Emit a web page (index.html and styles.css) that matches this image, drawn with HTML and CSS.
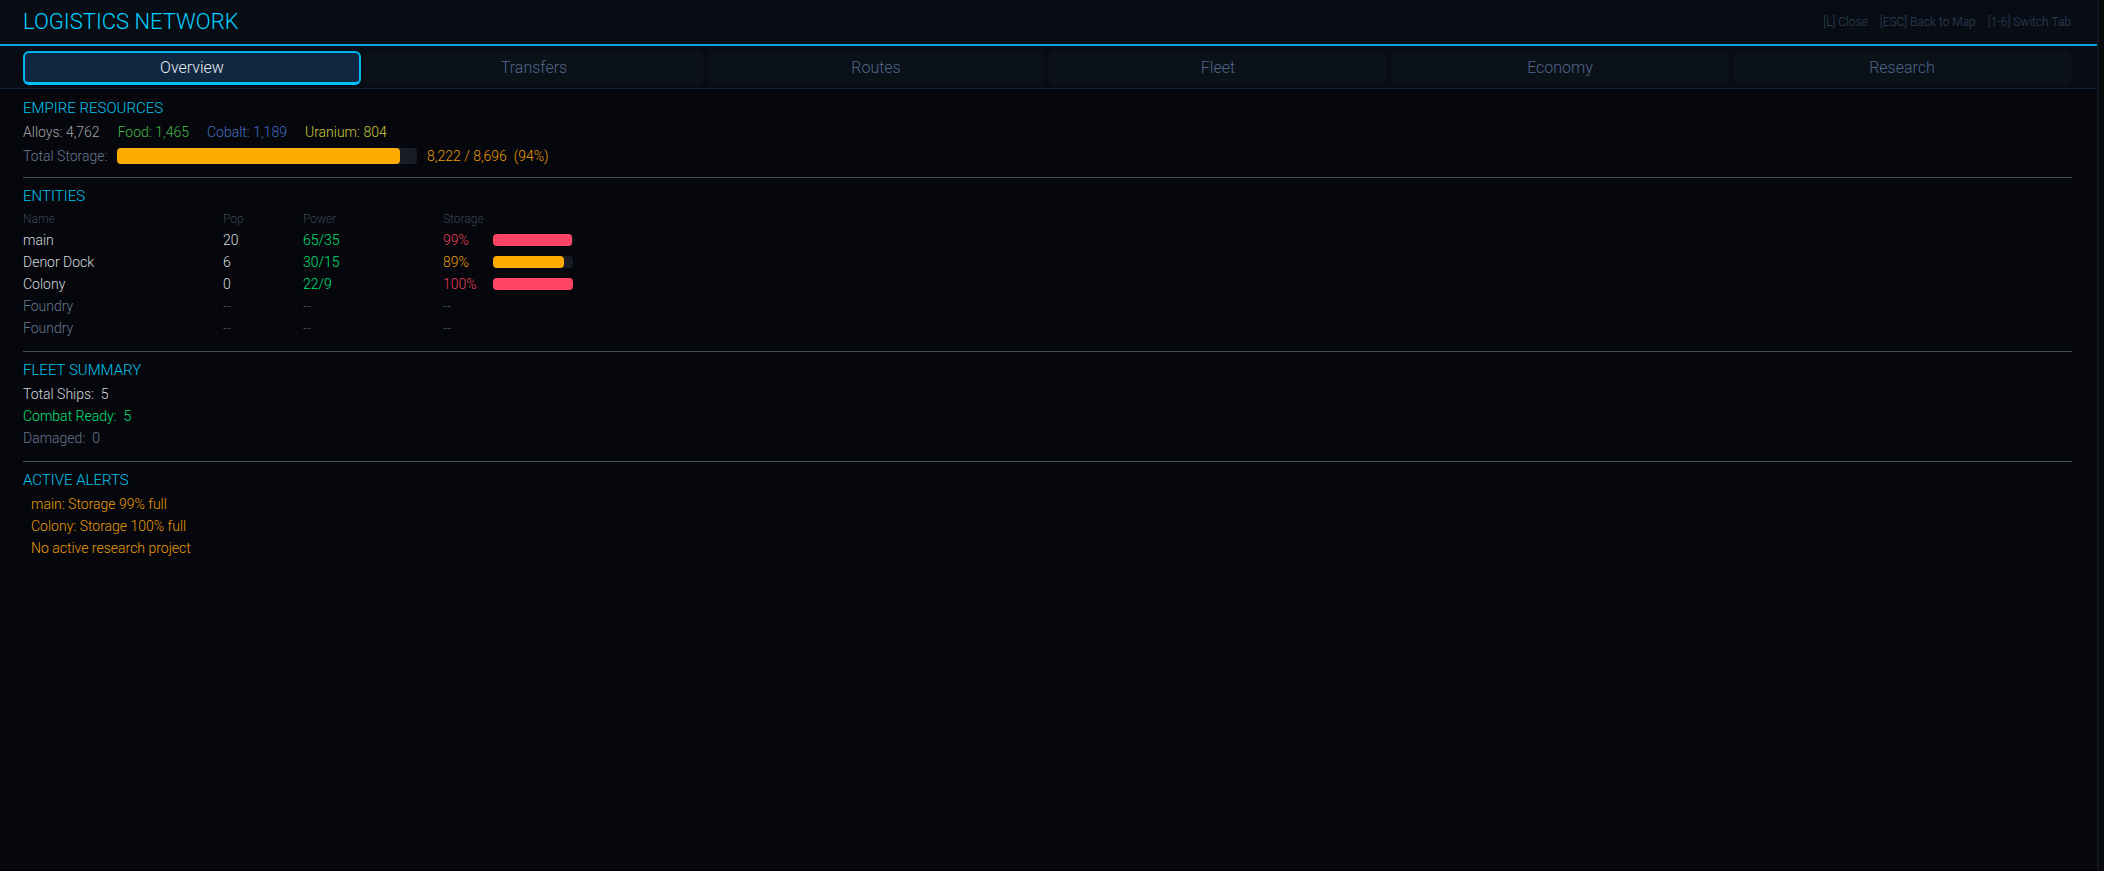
FILE: index.html
```
<!DOCTYPE html>
<html lang="en">
<head>
<meta charset="utf-8">
<title>Logistics Network</title>
<link rel="stylesheet" href="styles.css">
</head>
<body>
<div class="panel">
  <header class="header">
    <h1 class="title">LOGISTICS NETWORK</h1>
    <div class="hints"><span>[L] Close</span><span>[ESC] Back to Map</span><span>[1-6] Switch Tab</span></div>
  </header>
  <nav class="tabs">
    <button class="tab tab-active" type="button">Overview</button>
    <button class="tab" type="button">Transfers</button>
    <button class="tab" type="button">Routes</button>
    <button class="tab" type="button">Fleet</button>
    <button class="tab" type="button">Economy</button>
    <button class="tab" type="button">Research</button>
  </nav>
  <main class="content">
    <section class="section">
      <h2 class="heading">EMPIRE RESOURCES</h2>
      <div class="resources">
        <span class="alloys">Alloys: 4,762</span>
        <span class="food">Food: 1,465</span>
        <span class="cobalt">Cobalt: 1,189</span>
        <span class="uranium">Uranium: 804</span>
      </div>
      <div class="storage">
        <span class="storage-label">Total Storage:</span>
        <div class="bar bar-large"><div class="fill fill-warn" style="width: 94.3%"></div></div>
        <span class="warn">8,222 / 8,696  (94%)</span>
      </div>
    </section>
    <section class="section">
      <h2 class="heading">ENTITIES</h2>
      <table class="entities">
        <colgroup><col class="col-name"><col class="col-pop"><col class="col-power"><col></colgroup>
        <thead>
          <tr><th>Name</th><th>Pop</th><th>Power</th><th>Storage</th></tr>
        </thead>
        <tbody>
          <tr><td>main</td><td>20</td><td class="good">65/35</td><td><div class="level"><span class="level-text danger">99%</span><div class="bar"><div class="fill fill-danger" style="width: 99%"></div></div></div></td></tr>
          <tr><td>Denor Dock</td><td>6</td><td class="good">30/15</td><td><div class="level"><span class="level-text warn">89%</span><div class="bar"><div class="fill fill-warn" style="width: 89%"></div></div></div></td></tr>
          <tr><td>Colony</td><td>0</td><td class="good">22/9</td><td><div class="level"><span class="level-text danger">100%</span><div class="bar"><div class="fill fill-danger" style="width: 100%"></div></div></div></td></tr>
          <tr class="idle"><td class="muted">Foundry</td><td>--</td><td>--</td><td>--</td></tr>
          <tr class="idle"><td class="muted">Foundry</td><td>--</td><td>--</td><td>--</td></tr>
        </tbody>
      </table>
    </section>
    <section class="section">
      <h2 class="heading">FLEET SUMMARY</h2>
      <p class="row">Total Ships:  5</p>
      <p class="row good">Combat Ready:  5</p>
      <p class="row muted">Damaged:  0</p>
    </section>
    <section class="section">
      <h2 class="heading">ACTIVE ALERTS</h2>
      <ul class="alerts">
        <li class="row warn">main: Storage 99% full</li>
        <li class="row warn">Colony: Storage 100% full</li>
        <li class="row warn">No active research project</li>
      </ul>
    </section>
  </main>
</div>
</body>
</html>
```
FILE: styles.css
```
* {
  box-sizing: border-box;
}

body {
  margin: 0;
  padding-right: 5px;
  background: #08090d;
  color: #d6dadf;
  font: 300 14px/22px Roboto, "Liberation Sans", sans-serif;
}

.panel {
  min-height: 100vh;
  background: #05070c;
  border-right: 2px solid #121722;
  border-bottom: 1px solid #000;
}

.header {
  display: flex;
  align-items: center;
  justify-content: space-between;
  height: 46px;
  padding: 0 26px 0 23px;
  background: #080d15;
  border-bottom: 2px solid #00a5e0;
}

.title {
  margin: 0;
  color: #00d0ff;
  font-size: 22px;
  font-weight: 300;
  line-height: 28px;
}

.hints {
  display: flex;
  gap: 12px;
  color: #30435a;
  font-size: 12px;
}

.tabs {
  display: grid;
  grid-template-columns: repeat(6, minmax(0, 1fr));
  gap: 4px;
  padding: 5px 26px 3px 23px;
  background: #080c14;
  border-bottom: 1px solid #122036;
}

.tab {
  height: 34px;
  padding: 0;
  background: #0a1119;
  border: 0;
  border-radius: 6px;
  color: #50658a;
  font: inherit;
  font-size: 16px;
}

.tab-active {
  background: #0f2740;
  border: 2px solid #00b4f0;
  border-bottom: 3px solid #00c4ff;
  color: #e8edf2;
}

.content {
  padding: 0 25px 0 23px;
}

.section {
  padding: 8px 0 12px;
}

.section + .section {
  padding-top: 7px;
  border-top: 1px solid #434e5a;
}

.section:first-child {
  padding-bottom: 10px;
}

.heading {
  margin: 0 0 2px;
  color: #00c4ee;
  font-size: 15px;
  font-weight: 300;
  line-height: 22px;
}

.resources {
  display: flex;
  gap: 18px;
  margin-bottom: 2px;
}

.alloys { color: #a2a4a8; }
.food { color: #46b64a; }
.cobalt { color: #466cc0; }
.uranium { color: #ccc83a; }
.good { color: #00e078; }
.warn { color: #ea9c08; }
.danger { color: #e83e5c; }
.muted { color: #68788f; }

.storage {
  display: flex;
  align-items: center;
  white-space: pre;
}

.storage-label {
  flex: 0 0 94px;
  color: #68788f;
}

.bar {
  width: 80px;
  height: 12px;
  background: #171d27;
  border-radius: 4px;
}

.bar-large {
  width: 300px;
  height: 16px;
  margin-right: 10px;
  background: #191d27;
}

.fill {
  height: 100%;
  border-radius: 4px;
}

.fill-warn { background: #ffaa00; }
.fill-danger { background: #ff4464; }

.entities {
  width: 100%;
  border-collapse: collapse;
  table-layout: fixed;
}

.entities th,
.entities td {
  padding: 0;
  text-align: left;
  font-weight: 300;
}

.entities th {
  color: #3a4554;
  font-size: 12px;
  line-height: 20px;
}

.col-name { width: 200px; }
.col-pop { width: 80px; }
.col-power { width: 140px; }

.idle {
  color: #4c535d;
}

.level {
  display: flex;
  align-items: center;
}

.level-text {
  flex: 0 0 50px;
}

.row {
  margin: 0;
  white-space: pre;
}

.alerts {
  margin: 0;
  padding: 0 0 0 8px;
  list-style: none;
}
```
